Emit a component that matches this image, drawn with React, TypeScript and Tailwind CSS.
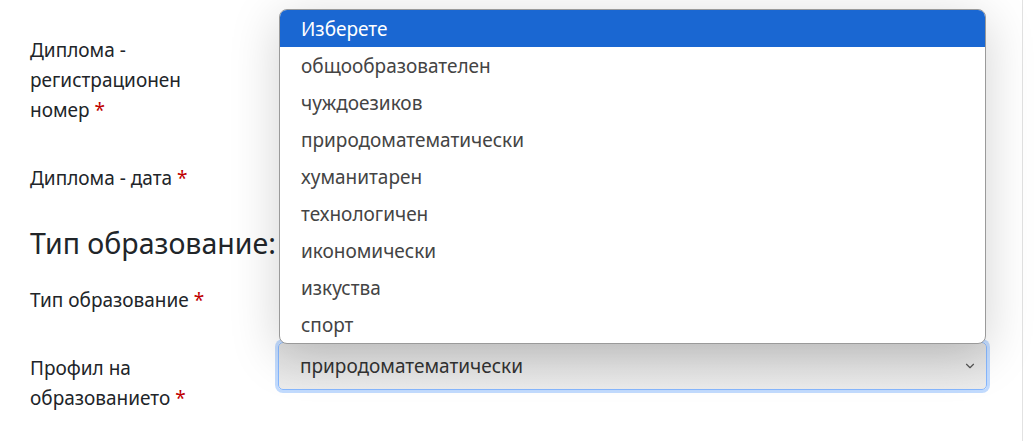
import { ChevronDown } from "lucide-react";

const options = [
  "Изберете",
  "общообразователен",
  "чуждоезиков",
  "природоматематически",
  "хуманитарен",
  "технологичен",
  "икономически",
  "изкуства",
  "спорт",
];

function Required() {
  return <span className="text-[#c00000]">*</span>;
}

export default function App() {
  return (
    <div className="h-[441px] w-[1036px] overflow-hidden bg-white font-['Noto_Sans',sans-serif] text-[19px] leading-[30px] text-[#212529]">
      <div className="relative h-full w-[1023px] border-r border-[#e2e2e2]">
        <div className="flex flex-col pl-[30px]">
          <div className="mt-[35px]">
            Диплома -
            <br />
            регистрационен
            <br />
            номер <Required />
          </div>
          <div className="mt-[38px]">
            Диплома - дата <Required />
          </div>
          <h3 className="mt-[33px] text-[28.5px] leading-[34px]">Тип образование:</h3>
          <div className="mt-[25px]">
            Тип образование <Required />
          </div>
          <div className="mt-[27px] flex">
            <div className="w-[248px] pt-[11px]">
              Профил на
              <br />
              образованието <Required />
            </div>
            <div className="relative flex h-[48px] w-[709px] items-center rounded-[5px] border border-[#86b7fe] bg-gradient-to-b from-[#dedede] to-[#ececec] pl-[21px] text-[#333] shadow-[0_0_0_3px_rgba(13,110,253,0.25)]">
              природоматематически
              <ChevronDown className="absolute right-[9px] top-[16px] size-[14px] text-[#555]" strokeWidth={2} />
            </div>
          </div>
        </div>

        <ul className="absolute left-[279px] top-[9px] w-[707px] overflow-hidden rounded-[8px] border border-[#9a9a9a] bg-white text-[#444] shadow-[0_10px_50px_rgba(0,0,0,0.18)]">
          {options.map((item, index) => (
            <li
              key={item}
              className={
                index === 0
                  ? "flex h-[37px] items-center bg-[#1a67d2] pl-[21px] text-white"
                  : "flex h-[37px] items-center pl-[21px]"
              }
            >
              {item}
            </li>
          ))}
        </ul>
      </div>
    </div>
  );
}
